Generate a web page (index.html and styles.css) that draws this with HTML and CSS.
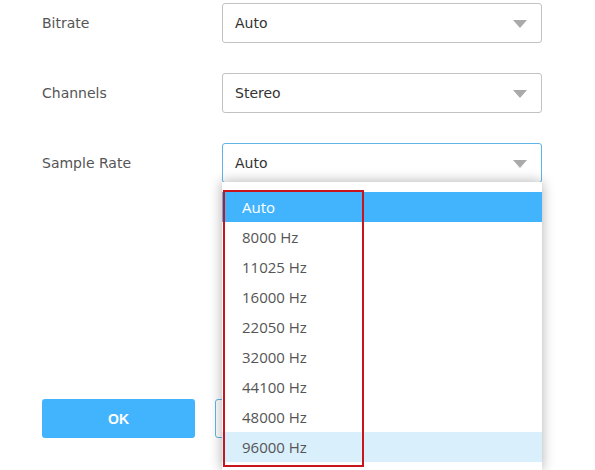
FILE: index.html
```html
<!DOCTYPE html>
<html>
<head>
<meta charset="utf-8">
<link rel="stylesheet" href="styles.css">
</head>
<body>
<div class="form">
  <div class="row">
    <div class="label">Bitrate</div>
    <div class="select"><span>Auto</span><i class="caret"></i></div>
  </div>
  <div class="row">
    <div class="label">Channels</div>
    <div class="select"><span>Stereo</span><i class="caret"></i></div>
  </div>
  <div class="row">
    <div class="label">Sample Rate</div>
    <div class="select-wrap">
      <div class="select focused"><span>Auto</span><i class="caret"></i></div>
      <ul class="menu">
        <li class="active">Auto</li>
        <li>8000 Hz</li>
        <li>11025 Hz</li>
        <li>16000 Hz</li>
        <li>22050 Hz</li>
        <li>32000 Hz</li>
        <li>44100 Hz</li>
        <li>48000 Hz</li>
        <li class="hover">96000 Hz</li>
      </ul>
      <div class="annot"></div>
    </div>
  </div>
  <div class="buttons">
    <button class="btn ok">OK</button>
    <button class="btn cancel" aria-label="Cancel"></button>
  </div>
</div>
</body>
</html>
```
FILE: styles.css
```css
html, body { margin: 0; padding: 0; background: #fff; }
body { width: 595px; height: 470px; overflow: hidden; font-family: "DejaVu Sans", Verdana, sans-serif; }
.form { padding: 3px 0 0 42px; }
.row { display: flex; align-items: center; height: 40px; margin-bottom: 30px; }
.label { width: 180px; font-size: 14px; color: #555; }
.select-wrap { position: relative; }
.select {
  box-sizing: border-box; width: 320px; height: 40px;
  border: 1px solid #c2c2c2; border-radius: 3px;
  display: flex; align-items: center; justify-content: space-between;
  padding: 0 14px 0 12px; font-size: 14px; color: #333; background: #fff;
}
.select.focused { border-color: #5fb5e6; }
.caret { width: 0; height: 0; border-left: 7px solid transparent; border-right: 7px solid transparent; border-top: 8px solid #aaa; margin-top: 1px; }
.menu {
  position: absolute; left: 0; top: 39px; z-index: 2;
  width: 320px; margin: 0; padding: 10px 0 8px; list-style: none;
  background: #fff; box-shadow: 0 0 12px rgba(0,0,0,0.32);
  font-family: "Open Sans", sans-serif; font-size: 15px; color: #555;
}
.menu li { height: 30px; line-height: 30px; padding-left: 20px; }
.menu li.active { background: #42b4fd; color: #fff; }
.menu li.hover { background: #d9effc; }
.annot {
  position: absolute; left: 1px; top: 47px; z-index: 3;
  width: 137px; height: 273px; border: 2px solid #c8151d;
}
.buttons { display: flex; gap: 20px; margin-top: 216px; }
.btn { box-sizing: border-box; width: 153px; height: 39px; border-radius: 3px; font-family: "Liberation Sans", Arial, sans-serif; font-size: 14px; font-weight: bold; }
.ok { background: #42b4fd; border: none; color: #fff; }
.cancel { background: #fff; border: 1px solid #5fb5e6; color: #42b4fd; }
```
